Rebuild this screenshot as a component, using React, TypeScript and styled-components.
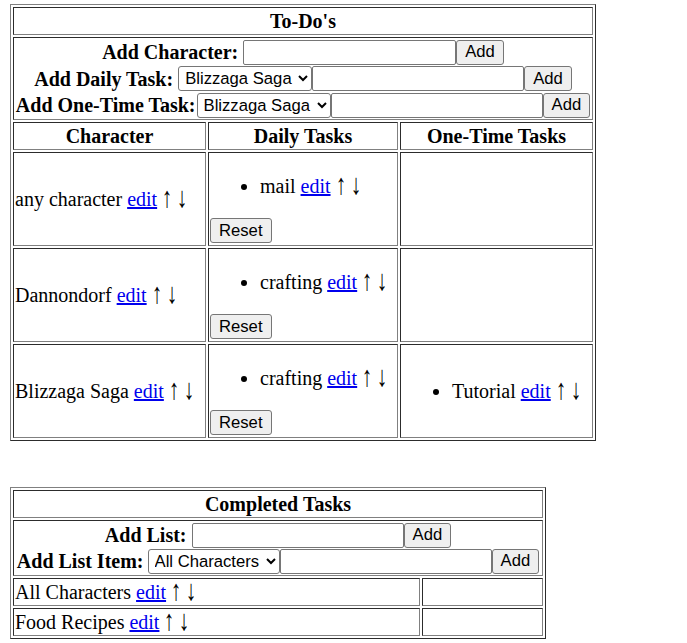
import React from "react";
import styled, { createGlobalStyle } from "styled-components";

const Global = createGlobalStyle`
  html, body { margin: 0; padding: 0; background: #ffffff; }
  body {
    font-family: "Liberation Serif", "Times New Roman", serif;
    font-size: 20px;
    color: #000000;
  }
`;

const Page = styled.div`
  display: flex;
  flex-direction: column;
  align-items: flex-start;
  gap: 46px;
  padding: 4px 0 0 10px;
`;

const Table = styled.table<{ $width: number }>`
  width: ${(p) => p.$width}px;
  box-sizing: border-box;
  table-layout: fixed;
  border-collapse: separate;
  border-spacing: 2px;
  border: 1px outset #808080;
`;

const HeadCell = styled.th`
  border: 1px inset #808080;
  padding: 1px;
  line-height: 24px;
  font-weight: bold;
  text-align: center;
`;

const Cell = styled.td`
  border: 1px inset #808080;
  padding: 1px;
  line-height: 24px;
  vertical-align: middle;
  white-space: nowrap;
`;

const FormLine = styled.div<{ $h: number }>`
  height: ${(p) => p.$h}px;
  display: flex;
  justify-content: safe center;
  align-items: center;
  white-space: nowrap;
`;

const Label = styled.b<{ $gap?: number }>`
  font-weight: bold;
  margin-right: ${(p) => p.$gap ?? 5}px;
`;

const controlFont = `
  font-family: "Liberation Sans", Arial, sans-serif;
  font-size: 16.67px;
  color: #000000;
  margin: 0;
  box-sizing: border-box;
`;

const TextInput = styled.input<{ $w: number }>`
  ${controlFont}
  width: ${(p) => p.$w}px;
  height: 25px;
  padding: 1px 3px;
  border: 1px solid #767676;
  border-radius: 2px;
  background: #ffffff;
`;

const Select = styled.select<{ $w: number }>`
  ${controlFont}
  width: ${(p) => p.$w}px;
  height: 25px;
  padding: 0 0 0 2px;
  border: 1px solid #767676;
  border-radius: 3px;
  background: #ffffff;
`;

const Button = styled.button`
  ${controlFont}
  height: 25px;
  padding: 0 8px;
  border: 1px solid #767676;
  border-radius: 3px;
  background: #efefef;
  line-height: 20px;
`;

const TaskList = styled.ul`
  margin: 20px 0;
  padding: 0 0 0 50px;
  list-style: disc;
`;

const ResetRow = styled.div`
  height: 26px;
  display: flex;
  align-items: flex-start;
`;

const EditLink = styled.a`
  color: #0000ee;
  text-decoration: underline;
`;

const Arrow = styled.span`
  display: inline-block;
  transform: scale(1.05, 1.45);
  transform-origin: 50% 70%;
`;

const Item: React.FC<{ name: string }> = ({ name }) => (
  <>
    {name} <EditLink href="#">edit</EditLink> <Arrow>↑</Arrow> <Arrow>↓</Arrow>
  </>
);

type Row = { name: string; daily: string[]; once: string[] };

const rows: Row[] = [
  { name: "any character", daily: ["mail"], once: [] },
  { name: "Dannondorf", daily: ["crafting"], once: [] },
  { name: "Blizzaga Saga", daily: ["crafting"], once: ["Tutorial"] },
];

const characters = ["any character", "Dannondorf", "Blizzaga Saga"];

const lists = ["All Characters", "Food Recipes"];

export default function App() {
  return (
    <>
      <Global />
      <Page>
        <Table $width={586}>
          <colgroup>
            <col style={{ width: 193 }} />
            <col style={{ width: 190 }} />
            <col style={{ width: 193 }} />
          </colgroup>
          <tbody>
            <tr>
              <HeadCell colSpan={3}>To-Do's</HeadCell>
            </tr>
            <tr>
              <Cell colSpan={3}>
                <FormLine $h={26}>
                  <Label>Add Character:</Label>
                  <TextInput $w={213} type="text" />
                  <Button>Add</Button>
                </FormLine>
                <FormLine $h={27}>
                  <Label>Add Daily Task:</Label>
                  <Select $w={134} defaultValue="Blizzaga Saga">
                    {characters.map((c) => (
                      <option key={c}>{c}</option>
                    ))}
                  </Select>
                  <TextInput $w={212} type="text" />
                  <Button>Add</Button>
                </FormLine>
                <FormLine $h={26}>
                  <Label $gap={1}>Add One-Time Task:</Label>
                  <Select $w={134} defaultValue="Blizzaga Saga">
                    {characters.map((c) => (
                      <option key={c}>{c}</option>
                    ))}
                  </Select>
                  <TextInput $w={212} type="text" />
                  <Button>Add</Button>
                </FormLine>
              </Cell>
            </tr>
            <tr>
              <HeadCell>Character</HeadCell>
              <HeadCell>Daily Tasks</HeadCell>
              <HeadCell>One-Time Tasks</HeadCell>
            </tr>
            {rows.map((r) => (
              <tr key={r.name}>
                <Cell>
                  <Item name={r.name} />
                </Cell>
                <Cell>
                  <TaskList>
                    {r.daily.map((d) => (
                      <li key={d}>
                        <Item name={d} />
                      </li>
                    ))}
                  </TaskList>
                  <ResetRow>
                    <Button>Reset</Button>
                  </ResetRow>
                </Cell>
                <Cell>
                  {r.once.length > 0 && (
                    <TaskList>
                      {r.once.map((d) => (
                        <li key={d}>
                          <Item name={d} />
                        </li>
                      ))}
                    </TaskList>
                  )}
                </Cell>
              </tr>
            ))}
          </tbody>
        </Table>

        <Table $width={536}>
          <colgroup>
            <col style={{ width: 407 }} />
            <col style={{ width: 121 }} />
          </colgroup>
          <tbody>
            <tr>
              <HeadCell colSpan={2}>Completed Tasks</HeadCell>
            </tr>
            <tr>
              <Cell colSpan={2}>
                <FormLine $h={26}>
                  <Label>Add List:</Label>
                  <TextInput $w={212} type="text" />
                  <Button>Add</Button>
                </FormLine>
                <FormLine $h={26}>
                  <Label $gap={4}>Add List Item:</Label>
                  <Select $w={132} defaultValue="All Characters">
                    {lists.map((c) => (
                      <option key={c}>{c}</option>
                    ))}
                  </Select>
                  <TextInput $w={212} type="text" />
                  <Button>Add</Button>
                </FormLine>
              </Cell>
            </tr>
            {lists.map((l) => (
              <tr key={l}>
                <Cell>
                  <Item name={l} />
                </Cell>
                <Cell />
              </tr>
            ))}
          </tbody>
        </Table>
      </Page>
    </>
  );
}
